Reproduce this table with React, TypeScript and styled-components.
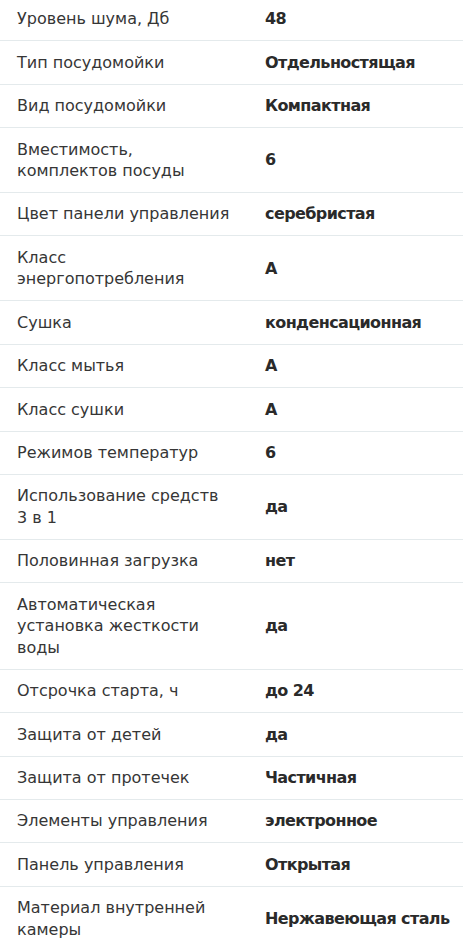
import React from "react";
import styled, { createGlobalStyle } from "styled-components";

const Global = createGlobalStyle`
  html, body { margin: 0; padding: 0; background: #fff; }
  body { font-family: "DejaVu Sans", "Noto Sans", sans-serif; }
`;

const Table = styled.div`
  display: flex;
  flex-direction: column;
  width: 463px;
  margin-top: -2px;
`;

const Row = styled.div`
  display: grid;
  grid-template-columns: 215px 1fr;
  column-gap: 33px;
  align-items: center;
  padding: 10.4px 0 10.4px 17px;
  border-bottom: 1px solid #e4eaec;
  &:last-child { border-bottom: none; }
`;

const Label = styled.div`
  font-size: 16px;
  line-height: 21.6px;
  color: #363636;
  font-weight: 400;
`;

const Value = styled.div`
  font-size: 16px;
  line-height: 21.6px;
  color: #2a2a2a;
  font-weight: 700;
  letter-spacing: -0.6px;
`;

const specs: [string, string][] = [
  ["Уровень шума, Дб", "48"],
  ["Тип посудомойки", "Отдельностящая"],
  ["Вид посудомойки", "Компактная"],
  ["Вместимость, комплектов посуды", "6"],
  ["Цвет панели управления", "серебристая"],
  ["Класс энергопотребления", "A"],
  ["Сушка", "конденсационная"],
  ["Класс мытья", "A"],
  ["Класс сушки", "A"],
  ["Режимов температур", "6"],
  ["Использование средств 3 в 1", "да"],
  ["Половинная загрузка", "нет"],
  ["Автоматическая установка жесткости воды", "да"],
  ["Отсрочка старта, ч", "до 24"],
  ["Защита от детей", "да"],
  ["Защита от протечек", "Частичная"],
  ["Элементы управления", "электронное"],
  ["Панель управления", "Открытая"],
  ["Материал внутренней камеры", "Нержавеющая сталь"],
];

export default function App() {
  return (
    <>
      <Global />
      <Table>
        {specs.map(([k, v]) => (
          <Row key={k}>
            <Label>{k}</Label>
            <Value>{v}</Value>
          </Row>
        ))}
      </Table>
    </>
  );
}
